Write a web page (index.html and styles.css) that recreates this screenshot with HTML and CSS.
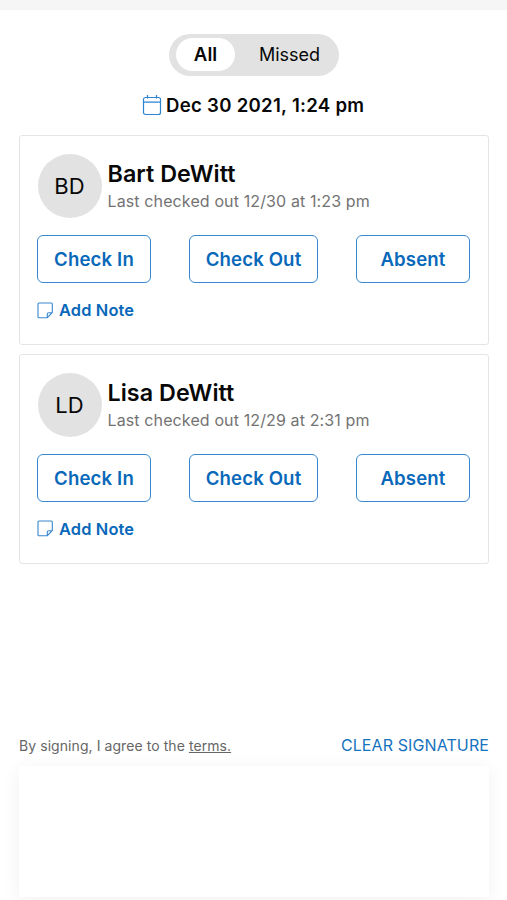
FILE: index.html
```html
<!DOCTYPE html>
<html lang="en">
<head>
<meta charset="utf-8">
<title>Attendance</title>
<link rel="stylesheet" href="styles.css">
</head>
<body>
<div class="topbar"></div>
<main class="page">
  <div class="toggle"><span class="tab active">All</span><span class="tab missed">Missed</span></div>
  <div class="date">
    <svg class="calendar" viewBox="0 0 20 22"><rect x="1.5" y="3.5" width="17" height="17" rx="2"/><path d="M1.5 8.2h17M5.5 1v3.5M14.5 1v3.5"/></svg>
    <span>Dec 30 2021, 1:24 pm</span>
  </div>
  <section class="card">
    <div class="person">
      <div class="avatar">BD</div>
      <div class="info"><h2 class="name">Bart DeWitt</h2><p class="status">Last checked out 12/30 at 1:23 pm</p></div>
    </div>
    <div class="actions"><button class="btn">Check In</button><button class="btn wide">Check Out</button><button class="btn">Absent</button></div>
    <div class="note"><svg class="note-icon" viewBox="0 0 16 17"><path d="M2 1h12.3q1 0 1 1v8.5l-5 5.2H2q-1 0-1-1V2q0-1 1-1zM10.3 15.5v-3.2q0-1.5 1.5-1.5h3.4"/></svg><span>Add Note</span></div>
  </section>
  <section class="card">
    <div class="person">
      <div class="avatar">LD</div>
      <div class="info"><h2 class="name">Lisa DeWitt</h2><p class="status">Last checked out 12/29 at 2:31 pm</p></div>
    </div>
    <div class="actions"><button class="btn">Check In</button><button class="btn wide">Check Out</button><button class="btn">Absent</button></div>
    <div class="note"><svg class="note-icon" viewBox="0 0 16 17"><path d="M2 1h12.3q1 0 1 1v8.5l-5 5.2H2q-1 0-1-1V2q0-1 1-1zM10.3 15.5v-3.2q0-1.5 1.5-1.5h3.4"/></svg><span>Add Note</span></div>
  </section>
  <div class="signing"><span class="agree">By signing, I agree to the <a class="terms">terms.</a></span><span class="clear">CLEAR SIGNATURE</span></div>
  <div class="pad"></div>
</main>
</body>
</html>
```
FILE: styles.css
```css
* { box-sizing: border-box; }
html, body { height: 900px; overflow: hidden; }
body { margin: 0; background: #fff; color: #080808; font-family: Inter, "Liberation Sans", sans-serif; display: flex; flex-direction: column; }
.topbar { height: 10px; flex: none; background: #f6f6f6; }
.page { flex: 1; display: flex; flex-direction: column; padding: 24px 18px 3px 19px; min-height: 0; }
.toggle { width: 170px; height: 42px; flex: none; margin-left: 150px; padding: 4px 7px; border-radius: 21px; background: #e2e2e2; display: flex; font-size: 18px; line-height: 33px; }
.tab { text-align: center; }
.active { width: 59px; height: 33px; border-radius: 17px; background: #fff; font-size: 18.6px; font-weight: 600; }
.missed { margin-left: 24px; white-space: nowrap; }
.date { height: 30px; flex: none; margin: 14px 0 15px 123px; display: flex; align-items: center; gap: 4px; font-size: 18.6px; font-weight: 600; letter-spacing: 0.28px; white-space: nowrap; }
.calendar { width: 20px; height: 22px; fill: none; stroke: #2c83d1; stroke-width: 1.2; }
.card { height: 210px; flex: none; margin-bottom: 8.5px; border: 1px solid #e5e5e5; border-radius: 3px; padding: 18px 18px 0; }
.person { display: flex; gap: 6px; height: 64px; margin-left: -0.5px; }
.avatar { width: 64px; height: 64px; flex: none; border-radius: 50%; background: #e2e2e2; font-size: 22px; line-height: 64px; text-align: center; }
.info { padding-top: 6px; white-space: nowrap; }
.name { margin: 0; font-size: 23.3px; line-height: 28px; font-weight: 600; letter-spacing: 0.05px; }
.status { margin: 0; font-size: 16px; line-height: 26px; color: #737373; letter-spacing: 0.12px; }
.actions { display: flex; justify-content: space-between; margin-top: 17px; margin-left: -1px; }
.btn { width: 114px; height: 48px; padding: 0; border: 1.5px solid #3788cf; border-radius: 6px; background: #fff; color: #0868b9; font: 600 18.6px/44px Inter, sans-serif; letter-spacing: 0.14px; }
.wide { width: 129px; }
.note { display: flex; align-items: center; gap: 6px; height: 24px; margin: 15px 0 0 -1px; color: #0868b9; font-size: 16.4px; font-weight: 600; letter-spacing: 0.14px; }
.note-icon { width: 16px; height: 17px; fill: none; stroke: #3788cf; stroke-width: 1.1; }
.signing { margin-top: auto; height: 24px; flex: none; display: flex; justify-content: space-between; align-items: center; white-space: nowrap; }
.agree { font-size: 14px; color: #666; letter-spacing: 0.07px; }
.terms { text-decoration: underline; }
.clear { font-size: 16px; color: #1673be; letter-spacing: 0.1px; }
.pad { height: 131px; flex: none; margin-top: 9px; background: #fff; box-shadow: 0 3px 18px rgba(0,0,0,.06); }
```
